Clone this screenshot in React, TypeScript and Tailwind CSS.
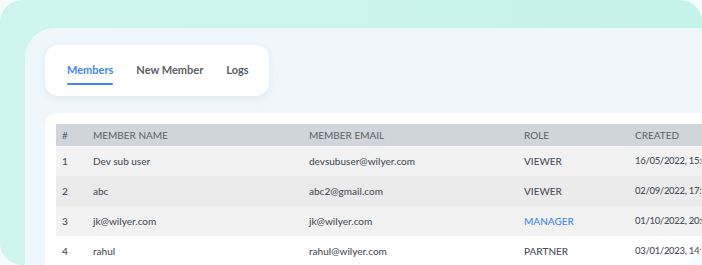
import React from 'react';

interface Member {
  id: number;
  name: string;
  email: string;
  role: string;
  created: string;
}

const members: Member[] = [
  { id: 1, name: 'Dev sub user', email: 'devsubuser@wilyer.com', role: 'VIEWER', created: '16/05/2022, 15:42' },
  { id: 2, name: 'abc', email: 'abc2@gmail.com', role: 'VIEWER', created: '02/09/2022, 17:10' },
  { id: 3, name: 'jk@wilyer.com', email: 'jk@wilyer.com', role: 'MANAGER', created: '01/10/2022, 20:05' },
  { id: 4, name: 'rahul', email: 'rahul@wilyer.com', role: 'PARTNER', created: '03/01/2023, 14:21' },
];

const rowBg = ['bg-[#f2f2f2]', 'bg-[#ebebeb]', 'bg-[#f2f2f2]', 'bg-white'];

export default function App() {
  return (
    <div
      className="w-[702px] h-[265px] overflow-hidden bg-[#f7fbfb]"
      style={{ fontFamily: 'Lato, "Noto Sans", sans-serif' }}
    >
      <div className="flex flex-col w-full h-full rounded-[22px] bg-gradient-to-r from-[#cff6ee] to-[#c5f2eb] overflow-hidden">
        <div className="ml-[25px] mt-[28px] flex-1 rounded-tl-[30px] bg-[#eff7fd] pl-[20px] pt-[17px] flex flex-col">
          <div className="flex items-start gap-[23px] w-[224px] h-[51px] rounded-[14px] bg-white shadow-[0_3px_10px_rgba(200,215,225,0.4)] pl-[22px] pt-[17px] text-[11px] font-bold">
            <div className="flex flex-col">
              <span className="text-[#3f87f5] leading-[16px]">Members</span>
              <span className="mt-[5px] h-[2px] bg-[#3f87f5] rounded-full" />
            </div>
            <span className="text-[#595e66] leading-[16px]">New Member</span>
            <span className="text-[#595e66] leading-[16px]">Logs</span>
          </div>

          <div className="mt-[17px] flex-1 rounded-tl-[12px] bg-white pl-[11px] pt-[11px]">
            <table className="border-collapse text-left text-[10px] text-[#4b5059] table-fixed w-[700px]">
              <colgroup>
                <col className="w-[31px]" />
                <col className="w-[216px]" />
                <col className="w-[215px]" />
                <col className="w-[111px]" />
                <col />
              </colgroup>
              <thead>
                <tr className="bg-[#d0d5db] h-[22px] text-[#5a5f66]">
                  <th className="pl-[6px] font-normal">#</th>
                  <th className="pl-[6px] font-normal">MEMBER NAME</th>
                  <th className="pl-[6px] font-normal">MEMBER EMAIL</th>
                  <th className="pl-[6px] font-normal">ROLE</th>
                  <th className="pl-[6px] font-normal">CREATED</th>
                </tr>
              </thead>
              <tbody>
                {members.map((m, i) => (
                  <tr key={m.id} className={`h-[30px] ${rowBg[i]}`}>
                    <td className="pl-[6px] font-medium">{m.id}</td>
                    <td className="pl-[6px] font-medium">{m.name}</td>
                    <td className="pl-[6px] font-medium">{m.email}</td>
                    <td className={`pl-[6px] font-medium ${m.role === 'MANAGER' ? 'text-[#3f87f5]' : ''}`}>
                      {m.role}
                    </td>
                    <td className="pl-[6px] font-medium whitespace-nowrap text-[9.5px] tracking-[-0.3px]">
                      {m.created}
                    </td>
                  </tr>
                ))}
              </tbody>
            </table>
          </div>
        </div>
      </div>
    </div>
  );
}
